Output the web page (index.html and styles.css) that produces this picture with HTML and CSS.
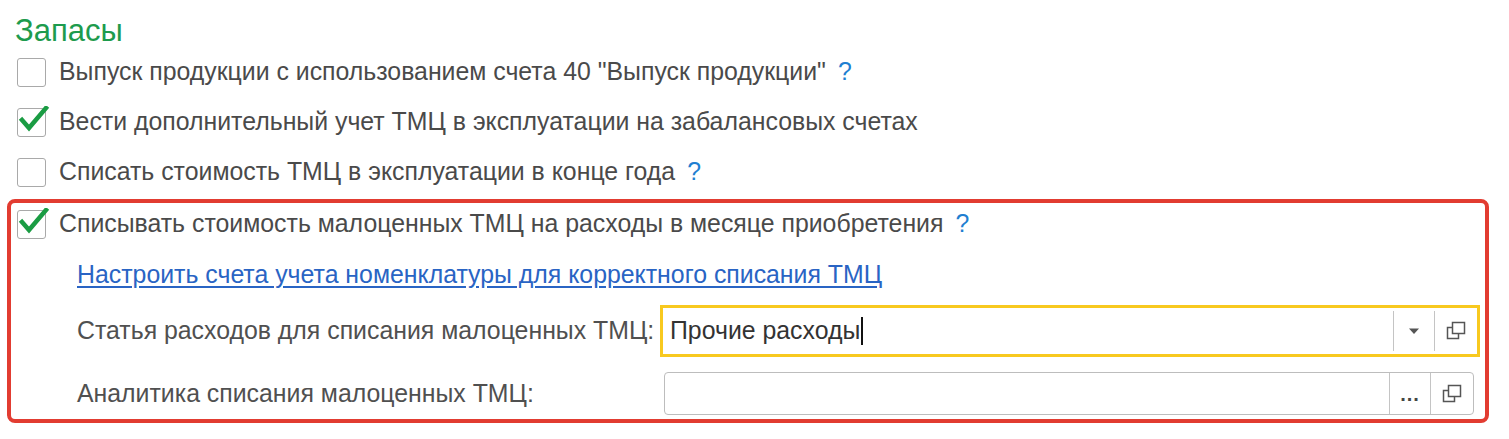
FILE: index.html
```html
<!DOCTYPE html>
<html lang="ru">
<head>
    <meta charset="UTF-8">
    <title>Запасы</title>
    <link rel="stylesheet" href="styles.css">
</head>
<body>
    <div class="settings">
        <h2 class="group-title">Запасы</h2>

        <div class="option">
            <span class="checkbox"></span>
            <span class="option-text">Выпуск продукции с использованием счета 40 "Выпуск продукции"</span>
            <span class="hint">?</span>
        </div>

        <div class="option">
            <span class="checkbox checked">
                <svg viewBox="0 0 32 32"><polyline points="4,14 11,22 28,2"/></svg>
            </span>
            <span class="option-text">Вести дополнительный учет ТМЦ в эксплуатации на забалансовых счетах</span>
        </div>

        <div class="option">
            <span class="checkbox"></span>
            <span class="option-text">Списать стоимость ТМЦ в эксплуатации в конце года</span>
            <span class="hint">?</span>
        </div>

        <div class="highlight">
            <div class="option option-first">
                <span class="checkbox checked">
                    <svg viewBox="0 0 32 32"><polyline points="4,14 11,22 28,2"/></svg>
                </span>
                <span class="option-text">Списывать стоимость малоценных ТМЦ на расходы в месяце приобретения</span>
                <span class="hint">?</span>
            </div>

            <div class="sub-block">
                <div class="link-row">
                    <a href="#" class="link">Настроить счета учета номенклатуры для корректного списания ТМЦ</a>
                </div>

                <div class="field-row">
                    <label class="field-label">Статья расходов для списания малоценных ТМЦ:</label>
                    <div class="field focused">
                        <div class="field-value">Прочие расходы<span class="caret"></span></div>
                        <div class="field-btn">
                            <svg width="12" height="8" viewBox="0 0 12 8"><polygon points="1,1.5 11,1.5 6,7" fill="#555"/></svg>
                        </div>
                        <div class="field-btn">
                            <svg width="22" height="20" viewBox="0 0 22 20" fill="none" stroke="#555" stroke-width="1.5">
                                <rect x="7.5" y="1.5" width="12" height="11"/>
                                <path d="M7.5 6.5H2.5V17.5H13.5V12.5"/>
                            </svg>
                        </div>
                    </div>
                </div>

                <div class="field-row">
                    <label class="field-label">Аналитика списания малоценных ТМЦ:</label>
                    <div class="field">
                        <div class="field-value"></div>
                        <div class="field-btn dots">...</div>
                        <div class="field-btn">
                            <svg width="22" height="20" viewBox="0 0 22 20" fill="none" stroke="#555" stroke-width="1.5">
                                <rect x="7.5" y="1.5" width="12" height="11"/>
                                <path d="M7.5 6.5H2.5V17.5H13.5V12.5"/>
                            </svg>
                        </div>
                    </div>
                </div>
            </div>
        </div>
    </div>
</body>
</html>
```

FILE: styles.css
```css
body {
    margin: 0;
    font-family: "Liberation Sans", Arial, sans-serif;
    font-size: 24.85px;
    color: #4a4a4a;
    background: #fff;
}
.settings {
    width: 1482px;
    padding: 0 7px;
}
.group-title {
    margin: 14px 0 0 8px;
    font-size: 31px;
    font-weight: normal;
    line-height: 33px;
    color: #1d9b4d;
}
.option {
    display: flex;
    align-items: center;
    height: 50px;
    padding-left: 10px;
}
.checkbox {
    position: relative;
    width: 27px;
    height: 27px;
    border: 1px solid #a9a9a9;
    border-radius: 3px;
    background: #fff;
    flex-shrink: 0;
    margin-right: 13px;
}
.checkbox svg {
    position: absolute;
    left: 0;
    top: -3px;
    width: 32px;
    height: 32px;
    fill: none;
    stroke: #1a9c43;
    stroke-width: 4.5;
    stroke-linecap: square;
}
.option-text {
    white-space: nowrap;
}
.hint {
    margin-left: 12px;
    color: #1f7fd1;
}
.highlight {
    margin-top: 2px;
    border: 4px solid #e23c31;
    border-radius: 8px;
    padding: 0 0 4px 6px;
}
.highlight .option-first {
    height: 42px;
    padding-left: 0;
}
.sub-block {
    padding-left: 60px;
}
.link-row {
    height: 60px;
    display: flex;
    align-items: center;
}
.link {
    color: #2964c4;
    text-decoration: underline;
    text-underline-offset: 3px;
}
.field-row {
    display: flex;
    align-items: center;
}
.field-row + .field-row {
    margin-top: 15px;
}
.field-label {
    width: 583px;
    white-space: nowrap;
    color: #505050;
}
.field {
    display: flex;
    width: 808px;
    height: 41px;
    margin-left: 4px;
    border: 1px solid #bdbdbd;
    border-radius: 4px;
    background: #fff;
}
.field.focused {
    width: 814px;
    height: 46px;
    margin-left: 0;
    border: 3px solid #f8c91f;
    border-radius: 0;
}
.field-value {
    flex: 1;
    display: flex;
    align-items: center;
    padding-left: 7px;
    color: #333;
    white-space: nowrap;
}
.caret {
    display: inline-block;
    width: 2px;
    height: 28px;
    margin-left: 1px;
    background: #111;
}
.field-btn {
    width: 40px;
    display: flex;
    align-items: center;
    justify-content: center;
    border-left: 1px solid #c4c4c4;
}
.field.focused .field-btn {
    margin: 3px 0;
}
.field-btn:last-child {
    width: 42px;
}
.dots {
    font-size: 20px;
    font-weight: bold;
    letter-spacing: 1px;
    color: #444;
    padding-top: 2px;
}
```
